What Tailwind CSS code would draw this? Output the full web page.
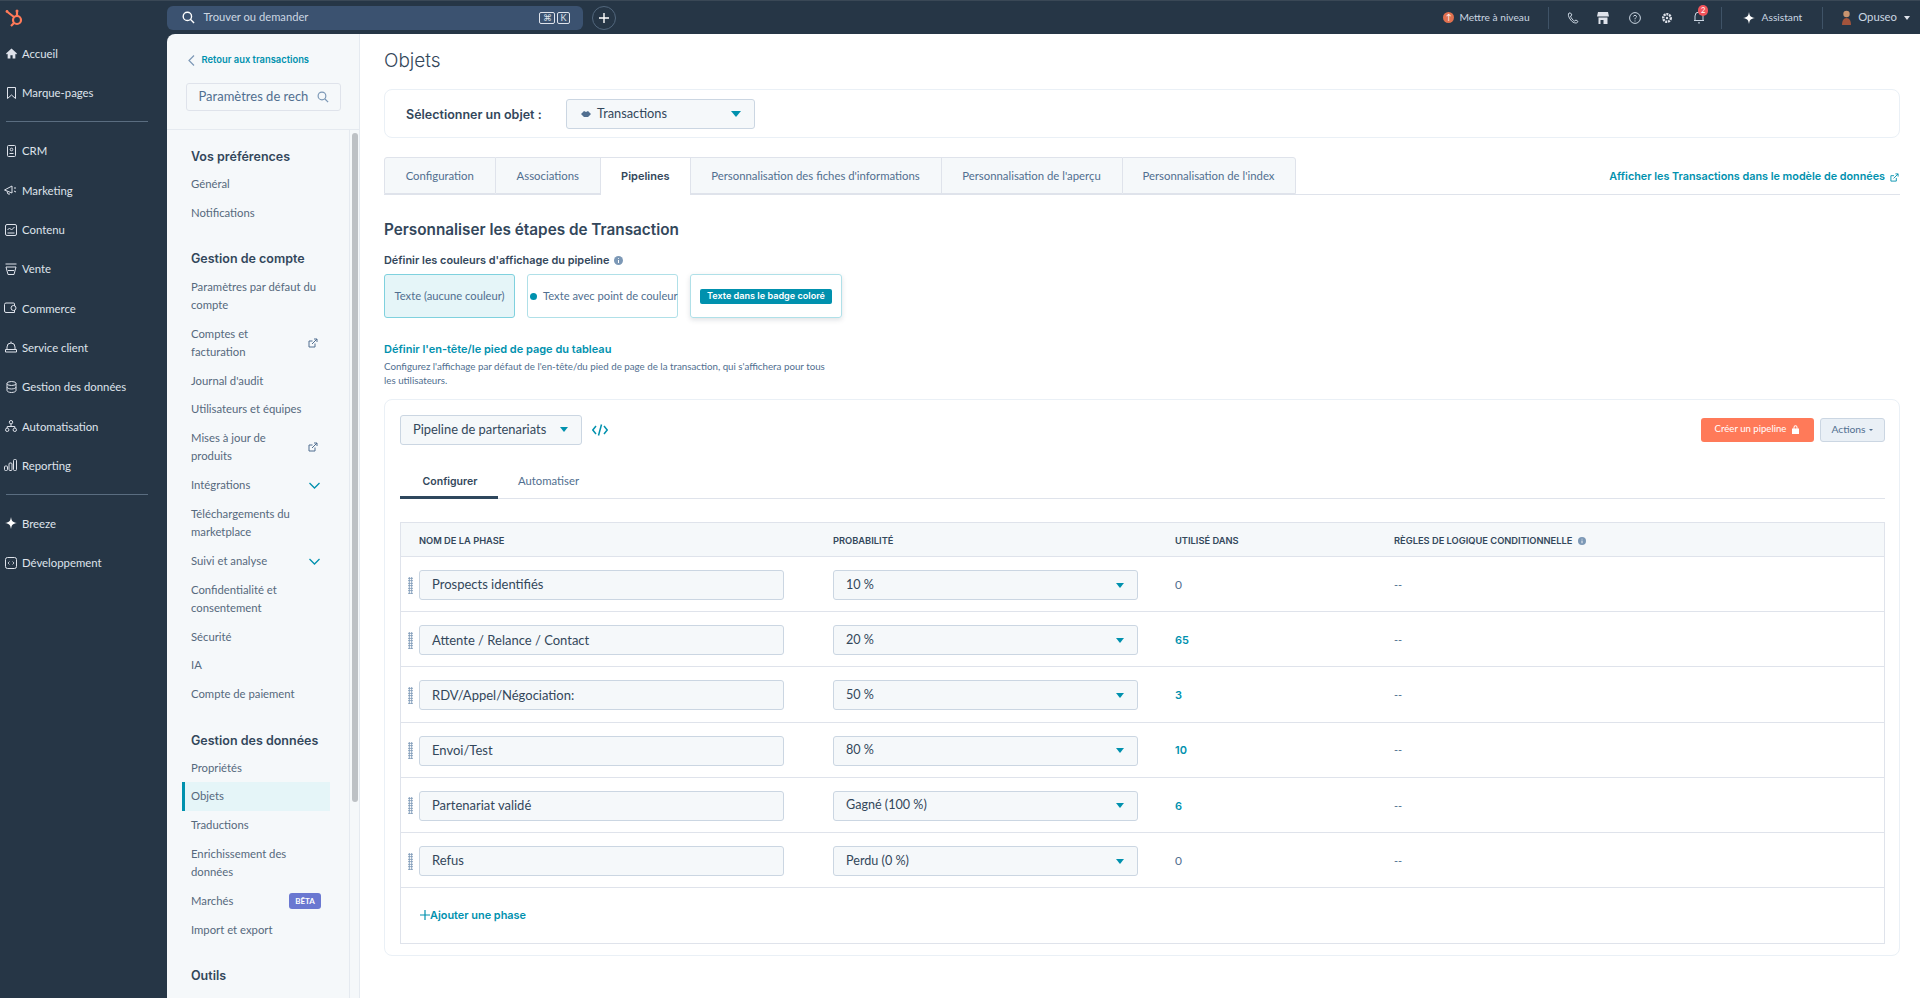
<!DOCTYPE html>
<html lang="fr">
<head>
<meta charset="utf-8">
<title>Objets</title>
<script src="https://cdn.jsdelivr.net/npm/@tailwindcss/browser@4"></script>
</head>
<body class="h-[998px] w-[1920px] overflow-hidden bg-[#263646] font-[family-name:Lato,sans-serif] text-[#33475b] [&_.font-semibold]:font-[family-name:Inter,sans-serif]">

<header class="flex h-[34px] items-center border-t border-t-[#3a4856] bg-[#263646] text-[#dfe3eb]">
  <div class="flex w-[166.5px] items-center pl-[4px]">
    <svg class="h-[20px] w-[20px]" viewBox="0 0 20 20" fill="none" stroke="#ff7a59" stroke-width="2.2"><circle cx="13" cy="12" r="4"/><path d="M13 8V4M10 9 3.5 4M10 15l-3 3"/><circle cx="3" cy="3.5" r="1.4" fill="#ff7a59" stroke="none"/><circle cx="13" cy="3" r="1.5" fill="#ff7a59" stroke="none"/></svg>
  </div>
  <div class="flex h-[24px] w-[416px] items-center rounded-md bg-[#3b5270] pl-[15px] pr-[12.500px]">
    <svg class="h-[13px] w-[13px]" viewBox="0 0 14 14" fill="none" stroke="#fff" stroke-width="1.5"><circle cx="5.8" cy="5.8" r="4.5"/><path d="m9 9 4 4"/></svg>
    <span class="ml-[9px] text-[11.200px] text-[#cbd6e2]">Trouver ou demander</span>
    <span class="ml-auto flex h-[12px] w-[16px] items-center justify-center rounded-[2px] border border-[#dfe3eb] text-[9px] leading-none">⌘</span>
    <span class="ml-[2px] flex h-[12px] w-[13px] items-center justify-center rounded-[2px] border border-[#dfe3eb] text-[9px] leading-none">K</span>
  </div>
  <span class="ml-[9.500px] flex h-[24px] w-[24px] items-center justify-center rounded-full border border-[#52677d]">
    <svg class="h-[10px] w-[10px]" viewBox="0 0 10 10" stroke="#fff" stroke-width="1.4"><path d="M5 0v10M0 5h10"/></svg>
  </span>
  <div class="ml-auto flex items-center pr-[10.500px]">
    <span class="h-[11px] w-[11px] rounded-full bg-[#e0704f] text-center text-[8px] leading-[11px] text-white">↑</span>
    <span class="ml-[5.500px] text-[10.200px] text-[#cbd6e2]">Mettre à niveau</span>
    <span class="ml-[18px] h-[22px] w-px bg-[#3f5367]"></span>
    <svg class="ml-[18.500px] h-[12px] w-[12px]" viewBox="0 0 12 12" fill="none" stroke="#cbd6e2"><path d="M2 1c-1 1-1 3 1 6s4 4 6 4c1 0 2-1 2-1.500L9 8 7.500 9C6 8.500 4 6 3.500 4L5 3 3.500 1z"/></svg>
    <svg class="ml-[18px] h-[12px] w-[12px]" viewBox="0 0 12 12" fill="#dfe3eb"><path d="M1 0h10l1 4.500H0zM1.500 5.500h9V12H6.500V8H3.500v4H1.500z"/></svg>
    <svg class="ml-[20px] h-[12px] w-[12px]" viewBox="0 0 12 12" fill="none" stroke="#cbd6e2"><circle cx="6" cy="6" r="5.400"/><path d="M4.500 4.500C4.500 3 7.500 3 7.500 4.500 7.500 5.800 6 5.500 6 7.300M6 8.500v1"/></svg>
    <svg class="ml-[20px] h-[12px] w-[12px]" viewBox="0 0 12 12"><circle cx="6" cy="6" r="3.800" fill="none" stroke="#dfe3eb" stroke-width="2.400" stroke-dasharray="2 .8"/><circle cx="6" cy="6" r="1.200" fill="#dfe3eb"/></svg>
    <span class="relative ml-[20px]">
      <svg class="block h-[13px] w-[12px]" viewBox="0 0 12 13" fill="none" stroke="#cbd6e2"><path d="M2 9.500V5a4 4 0 0 1 8 0v4.500zM1 9.500h10M5 11.500a1.200 1.200 0 0 0 2 0"/></svg>
      <span class="absolute left-[5px] top-[-6px] h-[11px] w-[10px] rounded-full bg-[#f2545b] text-center text-[7.500px] leading-[11px] text-white">2</span>
    </span>
    <span class="ml-[16px] h-[22px] w-px bg-[#3f5367]"></span>
    <svg class="ml-[20.500px] h-[12px] w-[12px]" viewBox="0 0 12 12" fill="#fff"><path d="M6 0c.6 4 1.500 5.200 6 6-4.500.8-5.400 2-6 6-.6-4-1.500-5.200-6-6 4.500-.8 5.400-2 6-6z"/></svg>
    <span class="ml-[7px] text-[10.200px] text-[#cbd6e2]">Assistant</span>
    <span class="ml-[20px] h-[22px] w-px bg-[#3f5367]"></span>
    <svg class="ml-[17.500px] h-[15px] w-[11px]" viewBox="0 0 11 15"><circle cx="5.500" cy="4" r="3.200" fill="#c8946f"/><path d="M1 15c0-4 1.500-7 4.500-7s4.500 3 4.500 7z" fill="#a4543c"/></svg>
    <span class="ml-[6.500px] text-[11.300px] text-[#cbd6e2]">Opuseo</span>
    <span class="ml-[6.500px] h-0 w-0 border-x-[3.500px] border-t-[4px] border-x-transparent border-t-[#dfe3eb]"></span>
  </div>
</header>

<div class="flex h-[964px]">
  <!-- global nav -->
  <nav class="w-[166.5px] shrink-0 text-[11.350px] text-[#dfe3eb]">
    <a class="flex h-[39.3px] items-center pl-[6px]"><svg class="mr-[5px] h-[11px] w-[11px]" viewBox="0 0 12 12" fill="#dfe3eb"><path d="M6 .5 0 6l1 1 .8-.7V11.500H4.800V8H7.200v3.500H10.200V6.300L11 7l1-1z"/></svg>Accueil</a>
    <a class="flex h-[39.3px] items-center pl-[6px]"><svg class="mr-[5px] h-[12px] w-[11px]" viewBox="0 0 11 12" fill="none" stroke="#dfe3eb"><path d="M1.500.5h8v11L5.500 8l-4 3.500z"/></svg>Marque-pages</a>
    <div class="flex h-[18.7px] items-center pl-[6px]"><span class="h-px w-[142px] bg-[#5a6d80]"></span></div>
    <a class="flex h-[39.3px] items-center pl-[6px]"><svg class="mr-[5px] h-[12px] w-[11px]" viewBox="0 0 11 12" fill="none" stroke="#dfe3eb"><rect x="1.500" y=".5" width="8" height="11" rx="1"/><circle cx="5.500" cy="4.500" r="1.300"/><path d="M3.500 8.500h4"/></svg>CRM</a>
    <a class="flex h-[39.3px] items-center pl-[4px]"><svg class="mr-[5px] h-[12px] w-[13px]" viewBox="0 0 13 12" fill="none" stroke="#dfe3eb"><path d="M.5 6 8 2v7L.5 6zM3 7.500 4 10h2"/><path d="M10 4h2M10 7l2 1"/></svg>Marketing</a>
    <a class="flex h-[39.3px] items-center pl-[5px]"><svg class="mr-[5px] h-[12px] w-[12px]" viewBox="0 0 12 12" fill="none" stroke="#dfe3eb"><rect x=".5" y=".5" width="11" height="11" rx="1.500"/><path d="m2.500 6 2-2 2 2 3-3M2.500 9h7"/></svg>Contenu</a>
    <a class="flex h-[39.3px] items-center pl-[5px]"><svg class="mr-[5px] h-[12px] w-[12px]" viewBox="0 0 12 12" fill="none" stroke="#dfe3eb"><path d="M.5 1h11M1 4h10L9 11.500H3zM3 7.500h6"/></svg>Vente</a>
    <a class="flex h-[39.3px] items-center pl-[4px]"><svg class="mr-[5px] h-[12px] w-[13px]" viewBox="0 0 13 12" fill="none" stroke="#dfe3eb"><path d="M10.500 4V2a1 1 0 0 0-1-1H2a1.500 1.500 0 0 0-1.500 1.500V9A1.500 1.500 0 0 0 2 10.500h8.500V8"/><circle cx="9.500" cy="6" r="2.500"/></svg>Commerce</a>
    <a class="flex h-[39.3px] items-center pl-[5px]"><svg class="mr-[5px] h-[12px] w-[12px]" viewBox="0 0 12 12" fill="none" stroke="#dfe3eb"><path d="M2 8V6a4 4 0 0 1 8 0v2M6 2V.5M.5 8.500h11v2.500H.5z"/></svg>Service client</a>
    <a class="flex h-[39.3px] items-center pl-[6px]"><svg class="mr-[5px] h-[12px] w-[11px]" viewBox="0 0 11 12" fill="none" stroke="#dfe3eb"><ellipse cx="5.500" cy="2.500" rx="4.500" ry="2"/><path d="M1 2.500v7c0 1 2 2 4.500 2s4.500-1 4.500-2v-7M1 6c0 1 2 2 4.500 2S10 7 10 6"/></svg>Gestion des données</a>
    <a class="flex h-[39.3px] items-center pl-[5px]"><svg class="mr-[5px] h-[12px] w-[12px]" viewBox="0 0 12 12" fill="none" stroke="#dfe3eb"><circle cx="6" cy="2.200" r="1.700"/><circle cx="2.200" cy="9.800" r="1.700"/><circle cx="9.800" cy="9.800" r="1.700"/><path d="M6 4v2.500M2.200 8V6.500h7.600V8"/></svg>Automatisation</a>
    <a class="flex h-[39.3px] items-center pl-[4px]"><svg class="mr-[5px] h-[12px] w-[13px]" viewBox="0 0 13 12" fill="none" stroke="#dfe3eb"><rect x=".5" y="7" width="3" height="4.500" rx="1"/><rect x="5" y="4" width="3" height="7.500" rx="1"/><rect x="9.500" y=".5" width="3" height="11" rx="1"/></svg>Reporting</a>
    <div class="flex h-[18.7px] items-center pl-[6px]"><span class="h-px w-[142px] bg-[#5a6d80]"></span></div>
    <a class="flex h-[39.3px] items-center pl-[5px]"><svg class="mr-[5px] h-[12px] w-[12px]" viewBox="0 0 12 12" fill="#fff"><path d="M6 0c.6 4 1.500 5.200 6 6-4.500.8-5.400 2-6 6-.6-4-1.500-5.200-6-6 4.500-.8 5.400-2 6-6z"/></svg>Breeze</a>
    <a class="flex h-[39.3px] items-center pl-[5px]"><svg class="mr-[5px] h-[12px] w-[12px]" viewBox="0 0 12 12" fill="none" stroke="#dfe3eb"><rect x=".5" y=".5" width="11" height="11" rx="2"/><path d="M4.500 4.500 3 6l1.500 1.500M7.500 4.500 9 6 7.500 7.500" stroke-width=".8"/></svg>Développement</a>
  </nav>

  <!-- settings panel -->
  <aside class="flex w-[193.5px] shrink-0 flex-col overflow-hidden rounded-tl-lg border-r border-[#e5eaf0] bg-[#f5f8fa]">
    <div class="h-[96px] shrink-0 border-b border-[#e5eaf0] pl-[19px] pr-[18px] pt-[20px]">
      <a class="flex h-[12px] items-center pl-[2px] text-[9.400px] font-semibold text-[#0091ae]"><svg class="mr-[7px] h-[11px] w-[7px]" viewBox="0 0 7 11" fill="none" stroke="#7c98b6" stroke-width="1.200"><path d="M6 .5 1 5.500l5 5"/></svg>Retour aux transactions</a>
      <div class="mt-[17px] flex h-[28px] items-center rounded-[3px] border border-[#dfe3eb] bg-[#f5f8fa] pl-[12px] pr-[11px]">
        <span class="text-[13px] text-[#516f90]">Paramètres de rech</span>
        <svg class="ml-auto h-[12px] w-[12px]" viewBox="0 0 14 14" fill="none" stroke="#7c98b6" stroke-width="1.400"><circle cx="5.800" cy="5.800" r="4.500"/><path d="m9 9 4 4"/></svg>
      </div>
    </div>
    <div class="flex min-h-0 flex-1">
      <div class="w-[183px] shrink-0 border-r border-[#e5eaf0] pl-[15.5px] pt-[18px] text-[11.300px] leading-[18.4px] text-[#55697d]">
        <h3 class="pl-[9px] text-[12.500px] font-semibold leading-[18px] text-[#33475b]">Vos préférences</h3>
        <ul class="mt-[4px] w-[148px] whitespace-nowrap [&>li]:flex [&>li]:items-center [&>li]:justify-between [&>li]:py-[5.15px] [&>li]:pl-[9px] [&>li]:pr-[9px]">
          <li>Général</li>
          <li>Notifications</li>
        </ul>
        <h3 class="mt-[23px] pl-[9px] text-[12.500px] font-semibold leading-[18px] text-[#33475b]">Gestion de compte</h3>
        <ul class="mt-[4px] w-[148px] whitespace-nowrap [&>li]:flex [&>li]:items-center [&>li]:justify-between [&>li]:py-[5.15px] [&>li]:pl-[9px] [&>li]:pr-[9px]">
          <li><span>Paramètres par défaut du<br>compte</span></li>
          <li><span>Comptes et<br>facturation</span><svg class="mr-[3px] h-[10px] w-[10px]" viewBox="0 0 10 10" fill="none" stroke="#516f90"><path d="M7 5.500V9H1V3h3.500M4 6l5-5M6 1h3v3"/></svg></li>
          <li>Journal d'audit</li>
          <li>Utilisateurs et équipes</li>
          <li><span>Mises à jour de<br>produits</span><svg class="mr-[3px] h-[10px] w-[10px]" viewBox="0 0 10 10" fill="none" stroke="#516f90"><path d="M7 5.500V9H1V3h3.500M4 6l5-5M6 1h3v3"/></svg></li>
          <li><span>Intégrations</span><svg class="mr-[1px] h-[7px] w-[11px]" viewBox="0 0 11 7" fill="none" stroke="#0091ae" stroke-width="1.300"><path d="m.5 1 5 5 5-5"/></svg></li>
          <li><span>Téléchargements du<br>marketplace</span></li>
          <li><span>Suivi et analyse</span><svg class="mr-[1px] h-[7px] w-[11px]" viewBox="0 0 11 7" fill="none" stroke="#0091ae" stroke-width="1.300"><path d="m.5 1 5 5 5-5"/></svg></li>
          <li><span>Confidentialité et<br>consentement</span></li>
          <li>Sécurité</li>
          <li>IA</li>
          <li>Compte de paiement</li>
        </ul>
        <h3 class="mt-[23px] pl-[9px] text-[12.500px] font-semibold leading-[18px] text-[#33475b]">Gestion des données</h3>
        <ul class="mt-[4px] w-[148px] whitespace-nowrap [&>li]:flex [&>li]:items-center [&>li]:justify-between [&>li]:py-[5.15px] [&>li]:pl-[9px] [&>li]:pr-[9px]">
          <li>Propriétés</li>
          <li class="border-l-[3px] border-[#0091ae] bg-[#e5f5f8] !pl-[6px]">Objets</li>
          <li>Traductions</li>
          <li><span>Enrichissement des<br>données</span></li>
          <li><span>Marchés</span><span class="flex h-[16px] w-[32px] items-center justify-center rounded-[3px] bg-[#6a78d1] text-[8px] font-bold text-white">BÊTA</span></li>
          <li>Import et export</li>
        </ul>
        <h3 class="mt-[23px] pl-[9px] text-[12.500px] font-semibold leading-[18px] text-[#33475b]">Outils</h3>
      </div>
      <div class="flex-1 pl-[2px] pt-[3px]"><div class="h-[669px] w-[6px] rounded-full bg-[#bdc1c5]"></div></div>
    </div>
  </aside>

  <!-- main -->
  <main class="min-w-0 flex-1 bg-white pl-[24px] pr-[20px]">
    <h1 class="flex h-[55px] items-center font-[family-name:Inter,sans-serif] text-[19px] font-light text-[#33475b]">Objets</h1>
    <section class="flex h-[49px] items-center rounded-lg border border-[#eaf0f6] pl-[21px]">
      <span class="w-[160px] pt-[3px] text-[12.500px] font-semibold">Sélectionner un objet :</span>
      <div class="flex h-[30px] w-[189px] items-center rounded-[3px] border border-[#cbd6e2] bg-[#f5f8fa] pl-[14px] pr-[13px] text-[12.800px] text-[#33475b]">
        <svg class="mr-[6px] h-[8px] w-[10px]" viewBox="0 0 10 8" fill="#516f90"><path d="M0 4 3 1l2 1 2-1 3 3-3 3H3z"/></svg>
        <span class="pt-[1px]">Transactions</span>
        <span class="ml-auto h-0 w-0 border-x-[5px] border-t-[6px] border-x-transparent border-t-[#0091ae]"></span>
      </div>
    </section>

    <div class="mt-[19px] flex h-[38px] items-stretch border-b border-[#dfe3eb] text-[11.350px] text-[#516f90]">
      <span class="flex w-[111.5px] items-center justify-center rounded-tl-[3px] border border-[#dfe3eb] bg-[#f5f8fa]">Configuration</span>
      <span class="flex w-[105.5px] items-center justify-center border-y border-r border-[#dfe3eb] bg-[#f5f8fa]">Associations</span>
      <span class="-mb-px flex w-[88.5px] items-center justify-center border-t border-[#dfe3eb] bg-white text-[11px] font-semibold text-[#33475b]">Pipelines</span>
      <span class="flex w-[251px] items-center justify-center border-y border-l border-[#dfe3eb] bg-[#f5f8fa]">Personnalisation des fiches d'informations</span>
      <span class="flex w-[181px] items-center justify-center border-y border-l border-[#dfe3eb] bg-[#f5f8fa]">Personnalisation de l'aperçu</span>
      <span class="flex w-[174px] items-center justify-center rounded-tr-[3px] border border-[#dfe3eb] bg-[#f5f8fa]">Personnalisation de l'index</span>
      <a class="ml-auto flex items-center pr-[1px] pt-[3px] text-[10.800px] font-semibold text-[#0091ae]">Afficher les Transactions dans le modèle de données<svg class="ml-[5px] h-[9px] w-[9px]" viewBox="0 0 10 10" fill="none" stroke="#0091ae"><path d="M7 5.500V9H1V3h3.500M4 6l5-5M6 1h3v3"/></svg></a>
    </div>

    <h2 class="mt-[25px] text-[15.300px] font-semibold leading-[20px]">Personnaliser les étapes de Transaction</h2>
    <p class="mt-[12px] flex items-center text-[10.900px] font-semibold leading-[16px]">Définir les couleurs d'affichage du pipeline<svg class="ml-[5px] h-[9px] w-[9px]" viewBox="0 0 9 9"><circle cx="4.500" cy="4.500" r="4.500" fill="#7c98b6"/><path d="M4.500 2v.8M4.500 4v3" stroke="#fff"/></svg></p>
    <div class="mt-[6px] flex gap-[12px] text-[11.200px] text-[#516f90]">
      <div class="flex h-[44px] w-[131px] items-center justify-center rounded-[3px] border border-[#7fd1de] bg-[#e5f5f8]">Texte (aucune couleur)</div>
      <div class="flex h-[44px] w-[151px] items-center whitespace-nowrap rounded-[3px] border border-[#b0e0e8] pl-[1px]"><span class="ml-[1px] mr-[6px] h-[7px] w-[7px] shrink-0 rounded-full bg-[#0091ae]"></span>Texte avec point de couleur</div>
      <div class="flex h-[44px] w-[152px] items-center justify-center rounded-[3px] border border-[#b0e0e8] shadow-[0_2px_5px_rgba(45,62,80,0.15)]"><span class="flex h-[15px] w-[132px] items-center justify-center rounded-[2px] bg-[#0091ae] text-[9.100px] font-semibold text-white">Texte dans le badge coloré</span></div>
    </div>
    <a class="mt-[23px] block text-[11px] font-semibold leading-[16px] text-[#0091ae]">Définir l'en-tête/le pied de page du tableau</a>
    <p class="mt-[2px] text-[9.750px] leading-[14px] text-[#516f90]">Configurez l'affichage par défaut de l'en-tête/du pied de page de la transaction, qui s'affichera pour tous<br>les utilisateurs.</p>

    <section class="mt-[12px] h-[557px] rounded-lg border border-[#eaf0f6] pl-[15px] pr-[14.500px]">
      <div class="flex h-[59px] items-center">
        <div class="flex h-[30px] w-[182px] items-center rounded-[3px] border border-[#cbd6e2] bg-[#f5f8fa] pl-[12px] pr-[13px] text-[12.900px]">Pipeline de partenariats<span class="ml-auto h-0 w-0 border-x-[4.500px] border-t-[5px] border-x-transparent border-t-[#0091ae]"></span></div>
        <svg class="ml-[10px] h-[12px] w-[16px]" viewBox="0 0 16 12" fill="none" stroke="#0091ae" stroke-width="1.500"><path d="M4 2 .8 6 4 10M12 2l3.200 4L12 10M9.500.5l-3 11"/></svg>
        <span class="ml-auto flex h-[24px] w-[113px] items-center justify-center rounded-[3px] bg-[#ff7a59] text-[9.600px] text-white">Créer un pipeline<svg class="ml-[6px] h-[9px] w-[7px]" viewBox="0 0 7 9" fill="#fff"><path d="M1.500 3.500V2.200a2 2 0 0 1 4 0v1.300H7V9H0V3.500zm1 0h2V2.200a1 1 0 0 0-2 0z"/></svg></span>
        <span class="ml-[6px] flex h-[24px] w-[65px] items-center justify-center rounded-[3px] border border-[#cbd6e2] bg-[#eaf0f6] text-[10.300px] text-[#516f90]">Actions<span class="ml-[3px] h-0 w-0 border-x-[2px] border-t-[2.500px] border-x-transparent border-t-[#516f90]"></span></span>
      </div>
      <div class="flex h-[40px] border-b border-[#dfe3eb] text-[11.300px]">
        <span class="-mb-px flex w-[98px] items-center justify-center border-b-[3px] border-[#2e475d] pl-[2px] pt-[9px] text-[10.500px] font-semibold">Configurer</span>
        <span class="flex items-center pl-[20px] pt-[5px] text-[#516f90]">Automatiser</span>
      </div>
      <div class="mt-[23px] border border-[#dfe3eb]">
        <div class="flex h-[34px] items-center border-b border-[#dfe3eb] bg-[#f5f8fa] pt-[3px] text-[9.300px] font-semibold uppercase text-[#33475b]">
          <span class="w-[432px] pl-[18px]">Nom de la phase</span>
          <span class="w-[342px]">Probabilité</span>
          <span class="w-[219px]">Utilisé dans</span>
          <span class="flex items-center">Règles de logique conditionnelle<svg class="ml-[6px] h-[8px] w-[8px]" viewBox="0 0 9 9"><circle cx="4.500" cy="4.500" r="4.500" fill="#7c98b6"/><path d="M4.500 2v.8M4.500 4v3" stroke="#fff"/></svg></span>
        </div>

        <div class="flex h-[55.200px] items-center border-b border-[#dfe3eb] pt-[2px] text-[13px]">
          <span class="ml-[7px] mr-[6px] h-[17px] w-[5px] bg-[radial-gradient(circle,#7c98b6_1px,transparent_1px)] bg-[length:2.500px_2.500px]"></span>
          <div class="flex h-[30px] w-[365px] items-center rounded-[3px] border border-[#cbd6e2] bg-[#f5f8fa] pl-[12px]">Prospects identifiés</div>
          <div class="ml-[49px] flex h-[30px] w-[305px] items-center justify-between rounded-[3px] border border-[#cbd6e2] bg-[#f5f8fa] pl-[12px] pr-[13px] text-[12.600px]">10 %<span class="h-0 w-0 border-x-[4.500px] border-t-[5px] border-x-transparent border-t-[#0091ae]"></span></div>
          <span class="ml-[37px] w-[219px] text-[12px] text-[#516f90]">0</span>
          <span class="text-[11px] text-[#516f90]">--</span>
        </div>
        <div class="flex h-[55.200px] items-center border-b border-[#dfe3eb] pt-[2px] text-[13px]">
          <span class="ml-[7px] mr-[6px] h-[17px] w-[5px] bg-[radial-gradient(circle,#7c98b6_1px,transparent_1px)] bg-[length:2.500px_2.500px]"></span>
          <div class="flex h-[30px] w-[365px] items-center rounded-[3px] border border-[#cbd6e2] bg-[#f5f8fa] pl-[12px]">Attente / Relance / Contact</div>
          <div class="ml-[49px] flex h-[30px] w-[305px] items-center justify-between rounded-[3px] border border-[#cbd6e2] bg-[#f5f8fa] pl-[12px] pr-[13px] text-[12.600px]">20 %<span class="h-0 w-0 border-x-[4.500px] border-t-[5px] border-x-transparent border-t-[#0091ae]"></span></div>
          <span class="ml-[37px] w-[219px] text-[11px] font-semibold text-[#0091ae]">65</span>
          <span class="text-[11px] text-[#516f90]">--</span>
        </div>
        <div class="flex h-[55.200px] items-center border-b border-[#dfe3eb] pt-[2px] text-[13px]">
          <span class="ml-[7px] mr-[6px] h-[17px] w-[5px] bg-[radial-gradient(circle,#7c98b6_1px,transparent_1px)] bg-[length:2.500px_2.500px]"></span>
          <div class="flex h-[30px] w-[365px] items-center rounded-[3px] border border-[#cbd6e2] bg-[#f5f8fa] pl-[12px]">RDV/Appel/Négociation:</div>
          <div class="ml-[49px] flex h-[30px] w-[305px] items-center justify-between rounded-[3px] border border-[#cbd6e2] bg-[#f5f8fa] pl-[12px] pr-[13px] text-[12.600px]">50 %<span class="h-0 w-0 border-x-[4.500px] border-t-[5px] border-x-transparent border-t-[#0091ae]"></span></div>
          <span class="ml-[37px] w-[219px] text-[11px] font-semibold text-[#0091ae]">3</span>
          <span class="text-[11px] text-[#516f90]">--</span>
        </div>
        <div class="flex h-[55.200px] items-center border-b border-[#dfe3eb] pt-[2px] text-[13px]">
          <span class="ml-[7px] mr-[6px] h-[17px] w-[5px] bg-[radial-gradient(circle,#7c98b6_1px,transparent_1px)] bg-[length:2.500px_2.500px]"></span>
          <div class="flex h-[30px] w-[365px] items-center rounded-[3px] border border-[#cbd6e2] bg-[#f5f8fa] pl-[12px]">Envoi/Test</div>
          <div class="ml-[49px] flex h-[30px] w-[305px] items-center justify-between rounded-[3px] border border-[#cbd6e2] bg-[#f5f8fa] pl-[12px] pr-[13px] text-[12.600px]">80 %<span class="h-0 w-0 border-x-[4.500px] border-t-[5px] border-x-transparent border-t-[#0091ae]"></span></div>
          <span class="ml-[37px] w-[219px] text-[11px] font-semibold text-[#0091ae]">10</span>
          <span class="text-[11px] text-[#516f90]">--</span>
        </div>
        <div class="flex h-[55.200px] items-center border-b border-[#dfe3eb] pt-[2px] text-[13px]">
          <span class="ml-[7px] mr-[6px] h-[17px] w-[5px] bg-[radial-gradient(circle,#7c98b6_1px,transparent_1px)] bg-[length:2.500px_2.500px]"></span>
          <div class="flex h-[30px] w-[365px] items-center rounded-[3px] border border-[#cbd6e2] bg-[#f5f8fa] pl-[12px]">Partenariat validé</div>
          <div class="ml-[49px] flex h-[30px] w-[305px] items-center justify-between rounded-[3px] border border-[#cbd6e2] bg-[#f5f8fa] pl-[12px] pr-[13px] text-[12.600px]">Gagné (100 %)<span class="h-0 w-0 border-x-[4.500px] border-t-[5px] border-x-transparent border-t-[#0091ae]"></span></div>
          <span class="ml-[37px] w-[219px] text-[11px] font-semibold text-[#0091ae]">6</span>
          <span class="text-[11px] text-[#516f90]">--</span>
        </div>
        <div class="flex h-[55.200px] items-center border-b border-[#dfe3eb] pt-[2px] text-[13px]">
          <span class="ml-[7px] mr-[6px] h-[17px] w-[5px] bg-[radial-gradient(circle,#7c98b6_1px,transparent_1px)] bg-[length:2.500px_2.500px]"></span>
          <div class="flex h-[30px] w-[365px] items-center rounded-[3px] border border-[#cbd6e2] bg-[#f5f8fa] pl-[12px]">Refus</div>
          <div class="ml-[49px] flex h-[30px] w-[305px] items-center justify-between rounded-[3px] border border-[#cbd6e2] bg-[#f5f8fa] pl-[12px] pr-[13px] text-[12.600px]">Perdu (0 %)<span class="h-0 w-0 border-x-[4.500px] border-t-[5px] border-x-transparent border-t-[#0091ae]"></span></div>
          <span class="ml-[37px] w-[219px] text-[12px] text-[#516f90]">0</span>
          <span class="text-[11px] text-[#516f90]">--</span>
        </div>
        <div class="flex h-[54.500px] items-center pl-[19px] text-[10.900px] font-semibold text-[#0091ae]"><svg class="h-[10px] w-[10px]" viewBox="0 0 10 10" stroke="#0091ae" stroke-width="1.200"><path d="M5 0v10M0 5h10"/></svg>Ajouter une phase</div>
      </div>
    </section>
  </main>
</div>
</body>
</html>
